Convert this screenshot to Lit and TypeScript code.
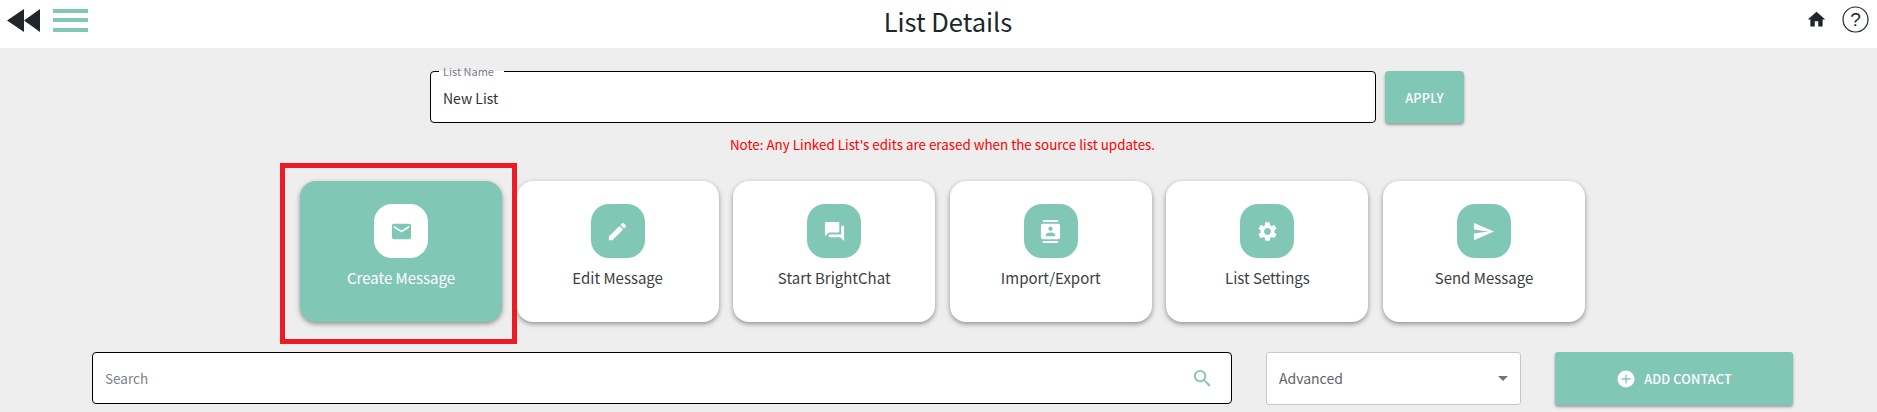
import { LitElement, html, css, svg } from "lit";
import { customElement } from "lit/decorators.js";

const ICONS: Record<string, unknown> = {
  mail: svg`<path d="M20 4H4c-1.100 0-2 .9-2 2v12c0 1.100.9 2 2 2h16c1.100 0 2-.9 2-2V6c0-1.100-.9-2-2-2zm0 4-8 5-8-5V6l8 5 8-5v2z"/>`,
  edit: svg`<path d="M3 17.250V21h3.750L17.810 9.940l-3.750-3.750L3 17.250zM20.710 7.040a1 1 0 0 0 0-1.410l-2.340-2.340a1 1 0 0 0-1.410 0l-1.830 1.830 3.750 3.750 1.830-1.830z"/>`,
  chat: svg`<path d="M21 6h-2v9H6v2c0 .55.45 1 1 1h11l4 4V7c0-.55-.45-1-1-1zm-4 6V3c0-.55-.45-1-1-1H3c-.55 0-1 .45-1 1v14l4-4h10c.55 0 1-.45 1-1z"/>`,
  contacts: svg`<path d="M20 0H4v2h16V0zM4 24h16v-2H4v2zM20 4H4c-1.100 0-2 .9-2 2v12c0 1.100.9 2 2 2h16c1.100 0 2-.9 2-2V6c0-1.100-.9-2-2-2zm-8 2.750c1.240 0 2.250 1.010 2.250 2.250s-1.010 2.250-2.250 2.250S9.750 10.240 9.750 9 10.760 6.750 12 6.750zM17 17H7v-1.500c0-1.670 3.330-2.500 5-2.500s5 .83 5 2.500V17z"/>`,
  settings: svg`<path d="M19.140 12.940c.04-.3.060-.61.060-.94 0-.32-.02-.64-.07-.94l2.030-1.580a.49.49 0 0 0 .12-.61l-1.920-3.320a.488.488 0 0 0-.59-.22l-2.390.96c-.5-.38-1.030-.7-1.620-.94l-.36-2.540a.484.484 0 0 0-.48-.41h-3.840c-.24 0-.43.17-.47.41l-.36 2.540c-.59.24-1.130.57-1.620.94l-2.390-.96c-.22-.08-.47 0-.59.22L2.740 8.870c-.12.21-.08.47.12.61l2.030 1.580c-.05.3-.09.63-.09.94s.02.64.07.94l-2.030 1.580a.49.49 0 0 0-.12.61l1.920 3.320c.12.22.37.29.59.22l2.390-.96c.5.38 1.030.7 1.620.94l.36 2.540c.05.24.24.41.48.41h3.840c.24 0 .44-.17.47-.41l.36-2.540c.59-.24 1.130-.56 1.620-.94l2.390.96c.22.08.47 0 .59-.22l1.920-3.320c.12-.22.07-.47-.12-.61l-2.010-1.580zM12 15.600c-1.980 0-3.600-1.620-3.600-3.600s1.620-3.600 3.600-3.600 3.600 1.620 3.600 3.600-1.620 3.600-3.600 3.600z"/>`,
  send: svg`<path d="M2.010 21 23 12 2.010 3 2 10l15 2-15 2z"/>`,
};

const ACTIONS = [
  { label: "Create Message", icon: "mail", active: true },
  { label: "Edit Message", icon: "edit" },
  { label: "Start BrightChat", icon: "chat" },
  { label: "Import/Export", icon: "contacts" },
  { label: "List Settings", icon: "settings" },
  { label: "Send Message", icon: "send" },
];

@customElement("app-root")
export class AppRoot extends LitElement {
  static styles = css`
    :host {
      display: block;
      height: 412px;
      overflow: hidden;
      position: relative;
      background: #eeeeee;
      font-family: "Noto Sans CJK SC", "Noto Sans", sans-serif;
      color: #3c4043;
    }

    .topbar {
      height: 48px;
      background: #fff;
      display: flex;
      align-items: center;
      padding: 0 8px 0 7px;
    }

    .left {
      width: 200px;
      display: flex;
      align-items: center;
      gap: 12px;
      margin-top: -8px;
    }

    .title {
      flex: 1;
      text-align: center;
      font-size: 25.500px;
      line-height: 36px;
      color: #212529;
      margin: -6px 0 0 20px;
    }

    .right {
      width: 200px;
      display: flex;
      justify-content: flex-end;
      align-items: center;
      gap: 15px;
      margin-top: -10px;
    }

    .name-row {
      display: flex;
      justify-content: center;
      gap: 9px;
      padding: 23px 0 0 0;
      margin-left: 17px;
    }

    .name-field {
      position: relative;
      box-sizing: border-box;
      width: 946px;
      height: 52px;
      border: 1.500px solid #000;
      border-radius: 4px;
      background: #fff;
      display: flex;
      align-items: center;
      padding: 1px 0 0 12px;
      font-size: 14px;
      color: #333;
    }

    .name-field label {
      position: absolute;
      top: -8px;
      left: 8px;
      padding: 0 10px 0 4px;
      line-height: 15px;
      font-size: 11px;
      color: #77808a;
      background: linear-gradient(#eeeeee 50%, #fff 50%);
    }

    .apply {
      width: 79px;
      height: 52px;
      border-radius: 4px;
      background: #81c7b5;
      box-shadow: 0 2px 3px rgba(0, 0, 0, 0.35);
      color: #fff;
      display: flex;
      align-items: center;
      justify-content: center;
      font-weight: 500;
      font-size: 12.800px;
      letter-spacing: 0.2px;
    }

    .note {
      text-align: center;
      color: #ff0000;
      font-size: 13.400px;
      line-height: 20px;
      margin: 11px 0 0 8px;
    }

    .cards {
      display: flex;
      justify-content: center;
      gap: 14.600px;
      margin: 27px 0 0 8px;
    }

    .card {
      width: 202px;
      height: 141px;
      box-sizing: border-box;
      border-radius: 16px;
      background: #fff;
      box-shadow: 0 2px 5px rgba(0, 0, 0, 0.4);
      display: flex;
      flex-direction: column;
      align-items: center;
      padding-top: 23px;
      font-size: 15px;
    }

    .card.active {
      background: #81c7b5;
      color: #fff;
    }

    .badge {
      width: 54px;
      height: 54px;
      border-radius: 18px;
      background: #81c7b5;
      color: #fff;
      display: flex;
      align-items: center;
      justify-content: center;
      margin-bottom: 9px;
    }

    .active .badge {
      background: #fff;
      color: #81c7b5;
    }

    .badge svg {
      width: 23px;
      height: 23px;
      fill: currentColor;
    }

    .highlight {
      position: absolute;
      left: 280px;
      top: 163px;
      width: 236.500px;
      height: 181px;
      box-sizing: border-box;
      border: 5px solid #ed1c24;
    }

    .tools {
      display: flex;
      margin: 30px 0 0 92px;
      height: 53px;
    }

    .search {
      width: 1140px;
      height: 52px;
      box-sizing: border-box;
      border: 1.500px solid #000;
      border-radius: 4px;
      background: #fff;
      display: flex;
      align-items: center;
      justify-content: space-between;
      padding: 0 17px 0 12px;
      font-size: 13.500px;
      color: #7a828a;
    }

    .search svg {
      width: 23px;
      height: 23px;
      fill: #81c7b5;
    }

    .advanced {
      width: 255px;
      height: 53px;
      box-sizing: border-box;
      margin-left: 34px;
      border: 1px solid #c8c8c8;
      border-radius: 3px;
      background: #fff;
      display: flex;
      align-items: center;
      justify-content: space-between;
      padding: 0 12px 2px;
      font-size: 14px;
      color: #5f6368;
    }

    .caret {
      width: 0;
      height: 0;
      margin-top: 2px;
      border-left: 5px solid transparent;
      border-right: 5px solid transparent;
      border-top: 5px solid #757575;
    }

    .add {
      width: 238px;
      height: 53px;
      margin-left: 34px;
      border-radius: 3px;
      background: #81c7b5;
      box-shadow: 0 2px 3px rgba(0, 0, 0, 0.35);
      color: #fff;
      display: flex;
      align-items: center;
      justify-content: center;
      gap: 8px;
      font-weight: 500;
      font-size: 12.800px;
      letter-spacing: 0.1px;
    }

    .add svg {
      width: 20px;
      height: 20px;
    }
  `;

  render() {
    return html`
      <div class="topbar">
        <div class="left">
          <svg width="34" height="24" viewBox="0 0 34 24" fill="#212529">
            <path d="M17 1v23L0 12.500zM33 1v23L17 12.500z" />
          </svg>
          <svg width="35" height="24" viewBox="0 0 35 24" fill="#81c7b5">
            <rect y="1" width="35" height="4" />
            <rect y="10" width="35" height="4" />
            <rect y="20" width="35" height="4" />
          </svg>
        </div>
        <div class="title">List Details</div>
        <div class="right">
          <svg width="21" height="21" viewBox="0 0 24 24" fill="#212529">
            <path d="M10 20v-6h4v6h5v-8h3L12 3 2 12h3v8z" />
          </svg>
          <svg width="27" height="27" viewBox="0 0 27 27">
            <circle cx="13.500" cy="13.500" r="12.500" fill="none" stroke="#212529" stroke-width="1.200" />
            <text x="13.500" y="20" text-anchor="middle" font-size="19" fill="#212529" font-family="Liberation Sans">?</text>
          </svg>
        </div>
      </div>

      <div class="name-row">
        <div class="name-field">
          <label>List Name</label>
          New List
        </div>
        <div class="apply">APPLY</div>
      </div>

      <div class="note">Note: Any Linked List's edits are erased when the source list updates.</div>

      <div class="cards">
        ${ACTIONS.map(
          (a) => html`
            <div class="card ${a.active ? "active" : ""}">
              <div class="badge">
                <svg viewBox="0 0 24 24">${ICONS[a.icon]}</svg>
              </div>
              ${a.label}
            </div>
          `
        )}
      </div>

      <div class="highlight"></div>

      <div class="tools">
        <div class="search">
          Search
          <svg viewBox="0 0 24 24">
            <path d="M15.500 14h-.79l-.28-.27A6.470 6.470 0 0 0 16 9.500 6.500 6.500 0 1 0 9.500 16c1.610 0 3.090-.59 4.230-1.570l.27.28v.79l5 4.990L20.490 19l-4.990-5zm-6 0C7.010 14 5 11.990 5 9.500S7.010 5 9.500 5 14 7.010 14 9.500 11.990 14 9.500 14z" />
          </svg>
        </div>
        <div class="advanced">Advanced <span class="caret"></span></div>
        <div class="add">
          <svg viewBox="0 0 20 20">
            <circle cx="10" cy="10" r="8.500" fill="#fff" />
            <path d="M10 5.500v9M5.500 10h9" stroke="#81c7b5" stroke-width="1.300" />
          </svg>
          ADD CONTACT
        </div>
      </div>
    `;
  }
}
